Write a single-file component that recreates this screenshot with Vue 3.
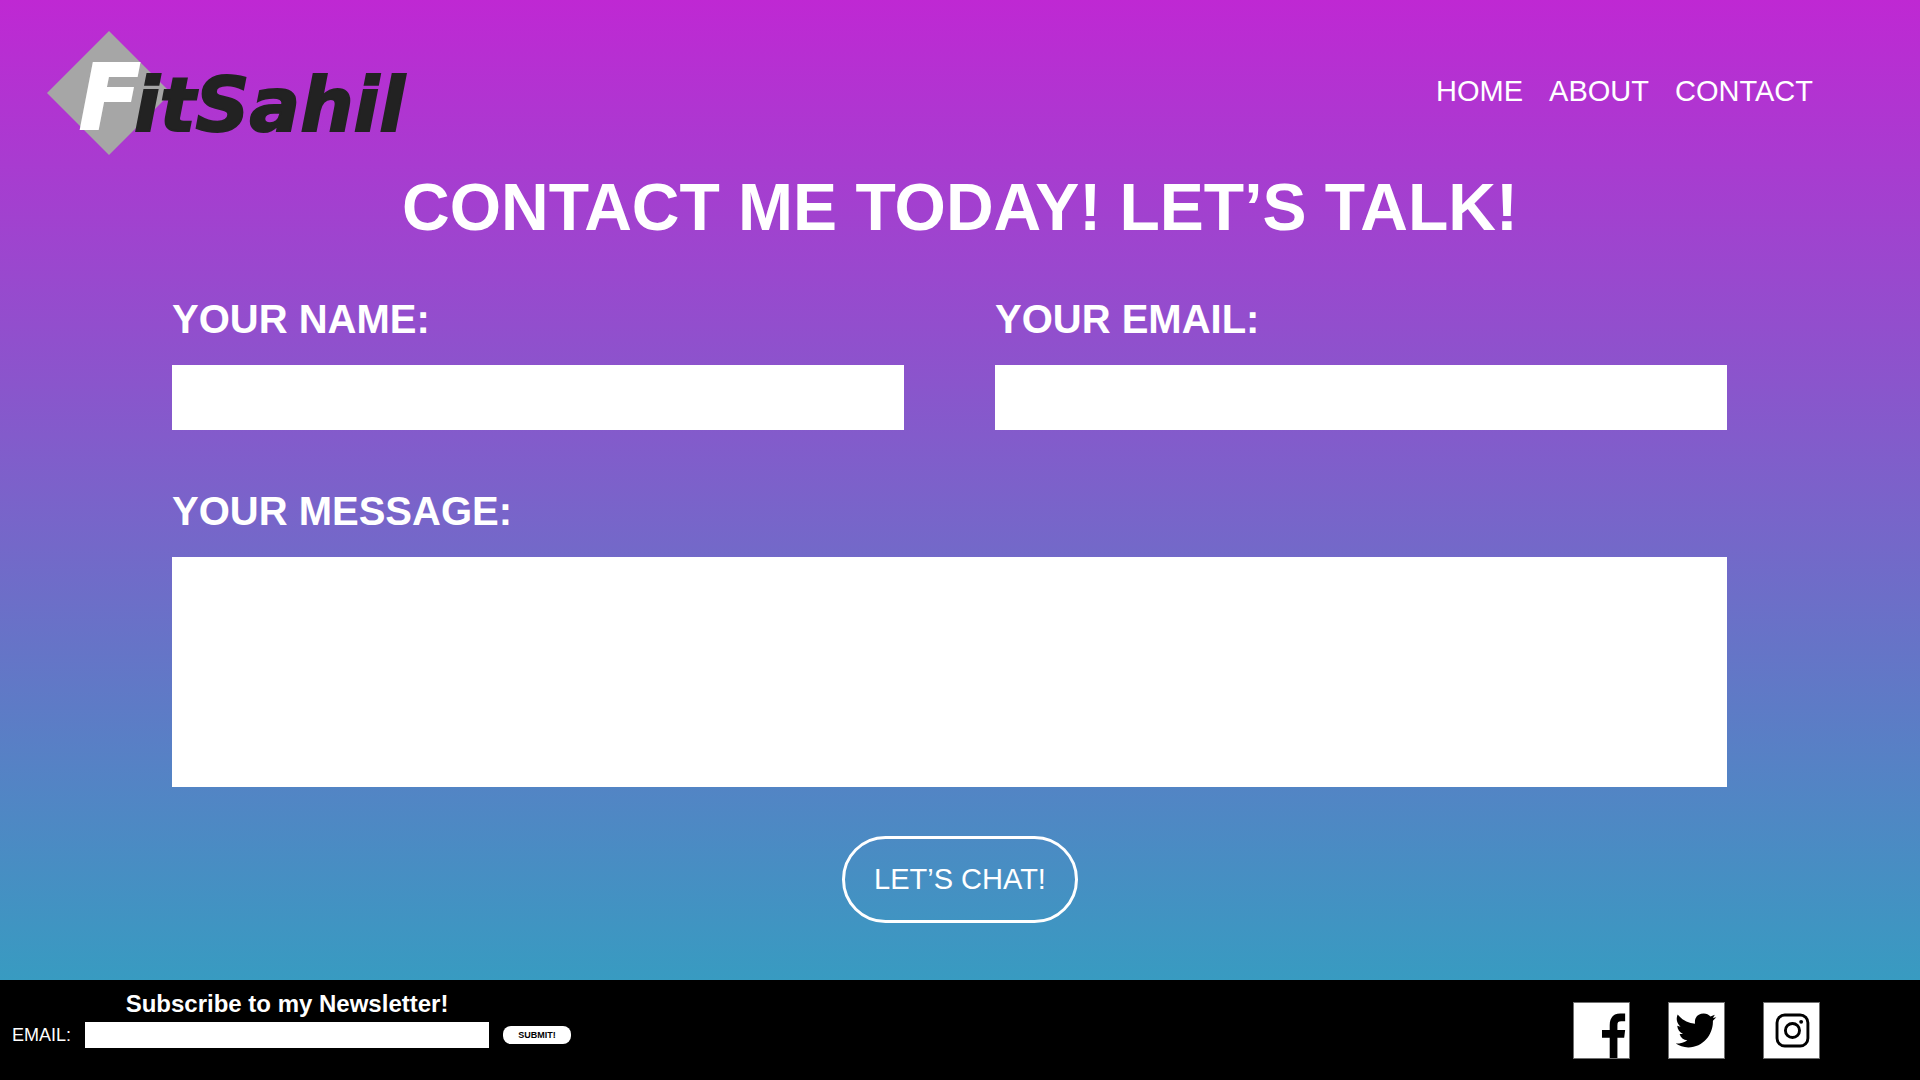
<script setup>
import { ref } from 'vue'

const name = ref('')
const email = ref('')
const message = ref('')
const subscriber = ref('')

const links = ['HOME', 'ABOUT', 'CONTACT']
</script>

<template>
  <div class="page">
    <header class="header">
      <a class="logo" href="#" aria-label="FitSahil">
        <svg width="370" height="124" viewBox="0 0 370 124">
          <path d="M62 0L124 62L62 124L0 62Z" fill="#a6a6a6" />
          <text class="logo-initial" x="32" y="98">F</text>
          <text class="logo-rest" x="87" y="100">itSahil</text>
        </svg>
      </a>
      <nav class="nav">
        <a v-for="link in links" :key="link" href="#">{{ link }}</a>
      </nav>
    </header>

    <main class="main">
      <h1>CONTACT ME TODAY! LET’S TALK!</h1>
      <form class="contact" @submit.prevent>
        <div class="field">
          <label for="name">YOUR NAME:</label>
          <input id="name" v-model="name" type="text" />
        </div>
        <div class="field">
          <label for="email">YOUR EMAIL:</label>
          <input id="email" v-model="email" type="email" />
        </div>
        <div class="field wide">
          <label for="message">YOUR MESSAGE:</label>
          <textarea id="message" v-model="message"></textarea>
        </div>
      </form>
      <button class="chat" type="button">LET’S CHAT!</button>
    </main>

    <footer class="footer">
      <form class="newsletter" @submit.prevent>
        <h2>Subscribe to my Newsletter!</h2>
        <label for="subscriber">EMAIL:</label>
        <input id="subscriber" v-model="subscriber" type="email" />
        <button type="submit">SUBMIT!</button>
      </form>
      <div class="social">
        <a href="#" aria-label="Facebook">
          <svg viewBox="0 0 57 57">
            <path d="M37 57V36H29V28H37V23C37 15 41 11 48 11H53V19H49C46 19 45 20 45 23V28H53L52 36H45V57Z" />
          </svg>
        </a>
        <a href="#" aria-label="Twitter">
          <svg viewBox="0 0 57 57">
            <path d="M9 12C14 18 20 21 27 21.500C26 15 30 11 36 11C39 11 41 12 43 14L47.500 12.200L45.500 15.500L49 14.800L45.500 18.500C46 32 36 46 20 46C15 46 10.500 44.500 7 42C12 42 16 41 19 38.500C15 38 12 36 11 32H14.500C11 30.500 9 27.500 8.500 23.500L12 24.500C8 21 7 16.500 9 12Z" />
          </svg>
        </a>
        <a href="#" aria-label="Instagram">
          <svg viewBox="0 0 57 57">
            <rect x="13.500" y="12.500" width="32" height="32" rx="8" fill="none" stroke="#000" stroke-width="3" />
            <circle cx="29.500" cy="28.500" r="7.300" fill="none" stroke="#000" stroke-width="3" />
            <circle cx="38.500" cy="19.500" r="2" />
          </svg>
        </a>
      </div>
    </footer>
  </div>
</template>

<style>
body {
  margin: 0;
}
</style>

<style scoped>
.page {
  display: flex;
  flex-direction: column;
  min-height: 100vh;
  color: #fff;
  font-family: "Liberation Sans", Arial, sans-serif;
  background: linear-gradient(#bf28d3 0, #389bc1 calc(100% - 100px));
}

.header,
.footer {
  display: flex;
  justify-content: space-between;
}

.header {
  align-items: flex-start;
  padding: 31px 107px 0 47px;
}

.logo svg {
  display: block;
  overflow: visible;
}

.logo text {
  font-family: "DejaVu Sans", Inter, sans-serif;
  font-style: italic;
  font-weight: 700;
  stroke-width: 2px;
}

.logo .logo-initial {
  font-size: 90px;
  fill: #fff;
  stroke: #fff;
}

.logo .logo-rest {
  font-size: 75px;
  fill: #222;
  stroke: #222;
}

.nav {
  display: flex;
  gap: 26px;
  padding-top: 42px;
}

.nav a {
  color: #fff;
  font-size: 29px;
  line-height: 36px;
  text-decoration: none;
}

.main {
  display: flex;
  flex: 1;
  flex-direction: column;
  align-items: center;
  padding: 16px 0 57px;
}

h1 {
  margin: 0 0 52px;
  font-size: 66px;
  line-height: 72px;
}

.contact {
  display: grid;
  grid-template-columns: 1fr 1fr;
  gap: 57px 91px;
  align-self: stretch;
  padding: 0 193px 0 172px;
}

.field {
  display: flex;
  flex-direction: column;
  gap: 22px;
}

.wide {
  grid-column: 1 / -1;
}

.field label {
  font-size: 40px;
  font-weight: 700;
  line-height: 48px;
}

input,
textarea {
  box-sizing: border-box;
  margin: 0;
  padding: 0 16px;
  border: 0;
  border-radius: 0;
  background: #fff;
  font: 24px "Liberation Sans", Arial, sans-serif;
}

.field input {
  height: 65px;
}

.field textarea {
  height: 230px;
  padding: 16px;
  resize: none;
}

.chat {
  width: 236px;
  height: 87px;
  margin-top: 49px;
  padding: 0;
  border: 3px solid #fff;
  border-radius: 44px;
  color: #fff;
  background: none;
  font: 29px "Liberation Sans", Arial, sans-serif;
}

.footer {
  box-sizing: border-box;
  min-height: 100px;
  padding: 10px 100px 10px 12px;
  background: #000;
}

.newsletter {
  display: grid;
  grid-template-columns: auto 404px auto;
  align-content: start;
  align-items: center;
  gap: 4px 14px;
}

.newsletter h2 {
  grid-column: 2;
  margin: 0;
  font-size: 24px;
  line-height: 28px;
  text-align: center;
}

.newsletter label {
  grid-column: 1;
  font-size: 18px;
  line-height: 24px;
}

.newsletter input {
  height: 26px;
  font-size: 18px;
}

.newsletter button {
  width: 68px;
  height: 18px;
  padding: 0;
  border: 0;
  border-radius: 8px;
  color: #000;
  background: #fff;
  font: 700 9px "Liberation Sans", Arial, sans-serif;
}

.social {
  display: flex;
  gap: 38px;
  padding-top: 12px;
}

.social a {
  box-sizing: border-box;
  width: 57px;
  height: 57px;
  border: 1px solid #707070;
  background: #fff;
}

.social svg {
  display: block;
  width: 100%;
  height: 100%;
}
</style>
